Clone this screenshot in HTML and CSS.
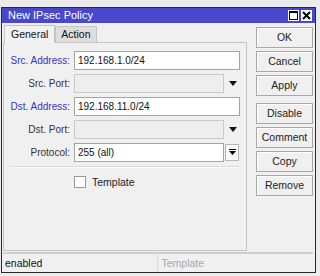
FILE: index.html
```html
<!DOCTYPE html>
<html lang="en">
<head>
  <meta charset="UTF-8" />
  <title>New IPsec Policy</title>
  <link rel="stylesheet" href="styles.css">
</head>
<body>
  <div class="window">
    <div class="titlebar">
      <span class="title">New IPsec Policy</span>
      <div class="title-btns">
        <span class="tbtn">
          <svg width="9" height="9" viewBox="0 0 9 9"><rect x="0.5" y="0.5" width="8" height="8" fill="none" stroke="#000"/><line x1="0" y1="1.5" x2="9" y2="1.5" stroke="#000"/></svg>
        </span>
        <span class="tbtn">
          <svg width="9" height="9" viewBox="0 0 9 9"><path d="M1 1 L8 8 M8 1 L1 8" stroke="#000" stroke-width="2"/></svg>
        </span>
      </div>
    </div>

    <div class="main">
      <div class="left">
        <div class="tabs">
          <div class="tab active">General</div>
          <div class="tab">Action</div>
        </div>
        <div class="panel">
          <div class="row">
            <label class="lbl blue">Src. Address:</label>
            <div class="input wide">192.168.1.0/24</div>
          </div>
          <div class="row">
            <label class="lbl">Src. Port:</label>
            <div class="input narrow disabled"></div>
            <span class="drop"></span>
          </div>
          <div class="row">
            <label class="lbl blue">Dst. Address:</label>
            <div class="input wide">192.168.11.0/24</div>
          </div>
          <div class="row">
            <label class="lbl">Dst. Port:</label>
            <div class="input narrow disabled"></div>
            <span class="drop"></span>
          </div>
          <div class="row">
            <label class="lbl">Protocol:</label>
            <div class="input narrow">255 (all)</div>
            <span class="pick">
              <svg width="7" height="7" viewBox="0 0 7 7"><line x1="0" y1="0.5" x2="7" y2="0.5" stroke="#000"/><path d="M0 2 H7 L3.5 6 Z" fill="#000"/></svg>
            </span>
          </div>
          <div class="sep"></div>
          <div class="check-row">
            <span class="checkbox"></span>
            <span>Template</span>
          </div>
        </div>
      </div>

      <div class="buttons">
        <button class="btn">OK</button>
        <button class="btn">Cancel</button>
        <button class="btn">Apply</button>
        <button class="btn gap">Disable</button>
        <button class="btn">Comment</button>
        <button class="btn">Copy</button>
        <button class="btn">Remove</button>
      </div>
    </div>

    <div class="status">
      <div class="cell">enabled</div>
      <div class="cell muted">Template</div>
    </div>
  </div>
</body>
</html>
```

FILE: styles.css
```css
body {
  margin: 0;
  background-color: #ebebeb;
  font-family: 'Liberation Sans', Arial, sans-serif;
  font-size: 10px;
  color: #222;
}

.window {
  margin: 7px 0 0 1px;
  width: 313px;
  height: 264px;
  border: 1px solid #2a2a2a;
  background-color: #f0f0f0;
  display: flex;
  flex-direction: column;
}

.titlebar {
  height: 15px;
  background-color: #4848cc;
  color: #fff;
  display: flex;
  align-items: center;
  justify-content: space-between;
  padding-left: 6px;
  font-size: 11px;
}

.title-btns {
  display: flex;
  gap: 2px;
  padding-right: 3px;
}

.tbtn {
  width: 11px;
  height: 11px;
  background-color: #fff;
  display: flex;
  align-items: center;
  justify-content: center;
}

.main {
  display: flex;
  padding: 2px 2px 0 1px;
}

.left {
  width: 244px;
}

.tabs {
  display: flex;
  align-items: flex-end;
  height: 17px;
  padding-left: 1px;
}

.tab {
  height: 15px;
  line-height: 15px;
  padding: 0 5px;
  background-color: #dedede;
  border: 1px solid #c4c4c4;
  border-bottom: none;
  color: #111;
  font-size: 10.5px;
}

.tab.active {
  height: 17px;
  line-height: 17px;
  padding: 0 6px;
  background-color: #f2f2f2;
  margin-bottom: -1px;
  position: relative;
  z-index: 1;
}

.panel {
  border: 1px solid #c4c4c4;
  padding-top: 8px;
  box-sizing: border-box;
  height: 209px;
}

.row {
  display: flex;
  align-items: center;
  height: 19px;
  margin-bottom: 4px;
}

.lbl {
  width: 66px;
  text-align: right;
  padding-right: 4px;
  color: #333;
}

.lbl.blue {
  color: #3535c8;
}

.input {
  height: 17px;
  line-height: 17px;
  border: 1px solid #a5a5a5;
  background-color: #fff;
  padding-left: 3px;
  color: #111;
}

.input.wide {
  width: 161px;
}

.input.narrow {
  width: 145px;
}

.input.disabled {
  background-color: #eeeeee;
  border-color: #c9c9c9;
}

.drop {
  width: 0;
  height: 0;
  margin-left: 5px;
  border-left: 4px solid transparent;
  border-right: 4px solid transparent;
  border-top: 5px solid #111;
}

.pick {
  width: 12px;
  height: 15px;
  margin-left: 1px;
  border: 1px solid #b5b5b5;
  background-color: #fafafa;
  display: flex;
  align-items: center;
  justify-content: center;
}

.sep {
  margin: 1px 7px 0 6px;
  border-top: 1px solid #dadada;
  border-bottom: 1px solid #fafafa;
}

.check-row {
  display: flex;
  align-items: center;
  gap: 6px;
  margin-top: 8px;
  padding-left: 70px;
  font-size: 10.5px;
}

.checkbox {
  width: 10px;
  height: 10px;
  border: 1px solid #9a9a9a;
  background-color: #fff;
}

.buttons {
  display: flex;
  flex-direction: column;
  gap: 3px;
  margin-left: 9px;
  padding-top: 2px;
}

.btn {
  width: 57px;
  height: 21px;
  font-family: inherit;
  font-size: 10.5px;
  color: #222;
  background-color: #f0f0f0;
  border: 1px solid #a7a7a7;
  box-shadow: inset 1px 1px 0 #fff;
  padding: 0;
}

.btn.gap {
  margin-top: 4px;
}

.status {
  display: flex;
  gap: 2px;
  margin: 1px 2px 0 1px;
  height: 19px;
  border-top: 2px solid #cfcfcf;
}

.cell {
  flex: 1;
  line-height: 18px;
  padding-left: 2px;
  border-right: 1px solid #dadada;
  color: #111;
  font-size: 10.5px;
}

.cell.muted {
  color: #a8a8a8;
  border-right: none;
}
```
